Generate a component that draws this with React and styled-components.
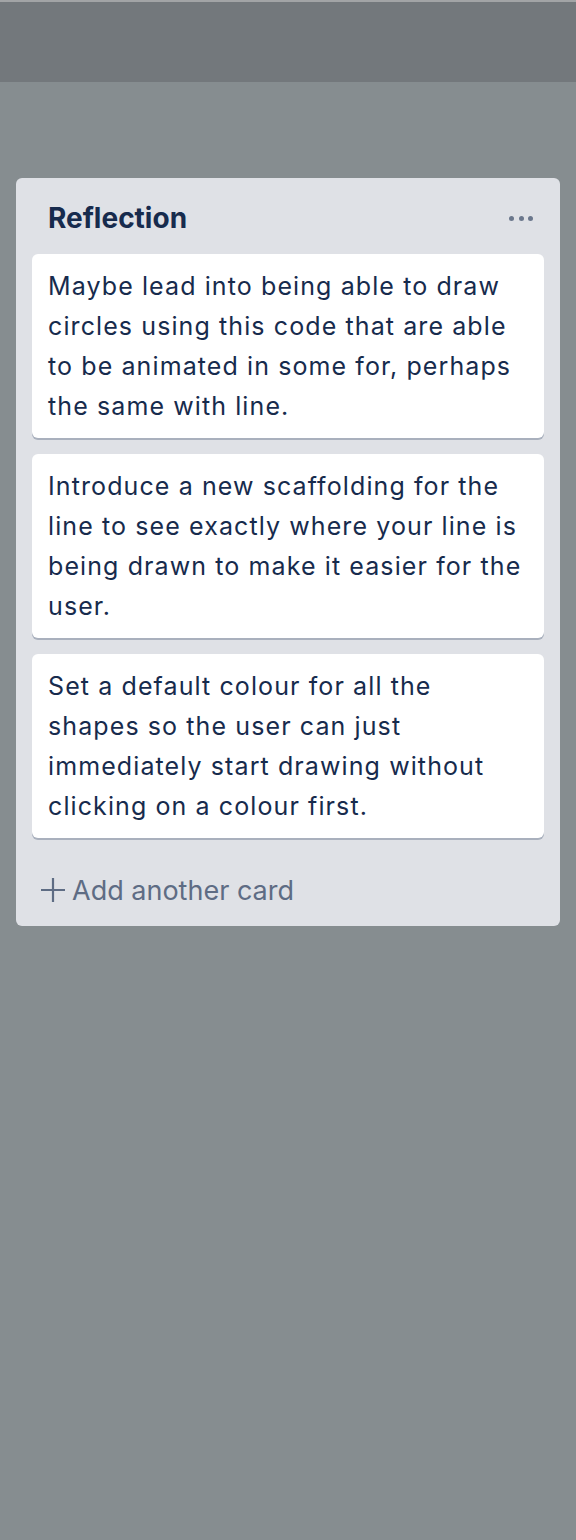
import React from "react";
import styled, { createGlobalStyle } from "styled-components";

const Global = createGlobalStyle`
  html, body { margin: 0; padding: 0; }
  body {
    background: #868d90;
    font-family: Inter, "Noto Sans", "Liberation Sans", sans-serif;
    -webkit-font-smoothing: antialiased;
  }
`;

const Page = styled.div`
  min-height: 1540px;
  background: #868d90;
`;

const TopBar = styled.header`
  height: 80px;
  background: #73787c;
  border-top: 2px solid #a2a4a6;
`;

const Board = styled.main`
  padding: 96px 16px 0 16px;
`;

const List = styled.section`
  width: 544px;
  background: #dfe1e6;
  border-radius: 6px;
  display: flex;
  flex-direction: column;
`;

const ListHeader = styled.div`
  box-sizing: border-box;
  height: 76px;
  display: flex;
  align-items: center;
  justify-content: space-between;
  padding: 4px 27px 0 32px;
`;

const Title = styled.h2`
  margin: 0;
  font-size: 28px;
  font-weight: 700;
  color: #172b4d;
  letter-spacing: 0;
`;

const MenuButton = styled.button`
  border: none;
  background: none;
  padding: 0;
  display: flex;
  gap: 4.5px;
  cursor: pointer;
`;

const Dot = styled.span`
  width: 5px;
  height: 5px;
  border-radius: 50%;
  background: #6b778c;
`;

const Cards = styled.div`
  display: flex;
  flex-direction: column;
  gap: 16px;
  padding: 0 16px;
`;

const Card = styled.div`
  background: #fff;
  border-radius: 6px;
  box-shadow: 0 2px 0 rgba(9, 30, 66, 0.25);
  padding: 12px 16px;
  font-size: 25px;
  line-height: 40px;
  letter-spacing: 1.1px;
  color: #172b4d;
`;

const AddRow = styled.div`
  height: 72px;
  margin-top: 16px;
  display: flex;
  align-items: center;
  padding: 0 24px;
  gap: 6px;
  color: #5e6c84;
  font-size: 27px;
`;

const cards = [
  "Maybe lead into being able to draw circles using this code that are able to be animated in some for, perhaps the same with line.",
  "Introduce a new scaffolding for the line to see exactly where your line is being drawn to make it easier for the user.",
  "Set a default colour for all the shapes so the user can just immediately start drawing without clicking on a colour first.",
];

export default function App() {
  return (
    <Page>
      <Global />
      <TopBar />
      <Board>
        <List>
          <ListHeader>
            <Title>Reflection</Title>
            <MenuButton aria-label="menu">
              <Dot />
              <Dot />
              <Dot />
            </MenuButton>
          </ListHeader>
          <Cards>
            {cards.map((c, i) => (
              <Card key={i}>{c}</Card>
            ))}
          </Cards>
          <AddRow>
            <svg width="26" height="26" viewBox="0 0 26 26">
              <path d="M13 1v24M1 13h24" stroke="#5e6c84" strokeWidth="2.2" />
            </svg>
            <span>Add another card</span>
          </AddRow>
        </List>
      </Board>
    </Page>
  );
}
